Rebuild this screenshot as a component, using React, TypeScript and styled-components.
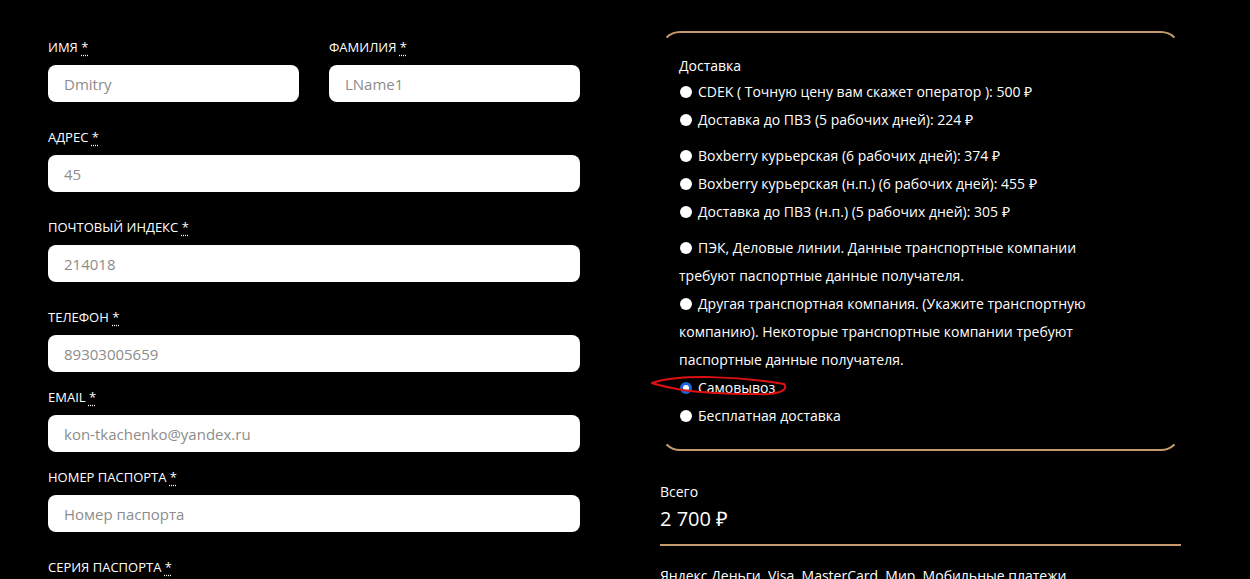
import styled, { createGlobalStyle } from "styled-components";

const GlobalStyle = createGlobalStyle`
  body {
    margin: 0;
    background: #000;
    color: #fff;
    font-family: "Open Sans", "Liberation Sans", sans-serif;
    overflow: hidden;
  }
`;

const Page = styled.div`
  display: grid;
  grid-template-columns: 532px 521px;
  column-gap: 80px;
  padding: 40px 0 0 48px;
  height: 579px;
  box-sizing: border-box;
`;

const FormColumn = styled.div`
  display: flex;
  flex-direction: column;
`;

const Pair = styled.div`
  display: grid;
  grid-template-columns: 1fr 1fr;
  gap: 30px;
`;

const Field = styled.div<{ $tight?: boolean }>`
  display: flex;
  flex-direction: column;
  margin-bottom: ${(p) => (p.$tight ? "18px" : "28px")};
`;

const Label = styled.label`
  font-size: 13px;
  line-height: 14px;
  text-transform: uppercase;
  margin-bottom: 11px;

  > abbr {
    text-decoration: underline dotted;
    text-underline-offset: 3px;
  }
`;

const Input = styled.input`
  height: 37px;
  box-sizing: border-box;
  border: none;
  border-radius: 8px;
  background: #fff;
  padding: 0 16px;
  font-family: inherit;
  font-size: 15px;
  color: #333;
  outline: none;

  &::placeholder {
    color: #8c8c8c;
  }
`;

const SideColumn = styled.div`
  display: flex;
  flex-direction: column;
  margin-top: -9px;
`;

const DeliveryBox = styled.div`
  border: 2px solid transparent;
  border-top-color: #c49a6c;
  border-bottom-color: #c49a6c;
  border-radius: 20px;
  padding: 22px 60px 19px 17px;
`;

const BoxTitle = styled.div`
  font-size: 14px;
  line-height: 22px;
  margin-bottom: 1px;
`;

const Group = styled.div`
  & + & {
    margin-top: 8px;
  }
`;

const Option = styled.label`
  position: relative;
  display: block;
  font-size: 14px;
  line-height: 28px;
`;

const Radio = styled.input.attrs({ type: "radio", name: "delivery" })`
  appearance: none;
  width: 12px;
  height: 12px;
  margin: 0 6px 0 1px;
  border-radius: 50%;
  background: #fff;
  vertical-align: -1px;
  box-sizing: border-box;

  &:checked {
    border: 3px solid #1766e0;
    background: #fff;
  }
`;

const Scribble = styled.svg`
  position: absolute;
  left: -30px;
  top: 1px;
  width: 140px;
  height: 28px;
  pointer-events: none;
`;

const TotalLabel = styled.div`
  font-size: 14px;
  line-height: 22px;
  margin-top: 30px;
`;

const TotalValue = styled.div`
  font-size: 20px;
  line-height: 28px;
  margin-top: 2px;
`;

const Divider = styled.hr`
  border: none;
  height: 2px;
  background: #c49a6c;
  margin: 11px 0 19px;
`;

const PaymentText = styled.div`
  font-size: 14px;
  line-height: 22px;
`;

const groups = [
  [
    "CDEK ( Точную цену вам скажет оператор ): 500 ₽",
    "Доставка до ПВЗ (5 рабочих дней): 224 ₽",
  ],
  [
    "Boxberry курьерская (6 рабочих дней): 374 ₽",
    "Boxberry курьерская (н.п.) (6 рабочих дней): 455 ₽",
    "Доставка до ПВЗ (н.п.) (5 рабочих дней): 305 ₽",
  ],
  [
    "ПЭК, Деловые линии. Данные транспортные компании требуют паспортные данные получателя.",
    "Другая транспортная компания. (Укажите транспортную компанию). Некоторые транспортные компании требуют паспортные данные получателя.",
    "Самовывоз",
    "Бесплатная доставка",
  ],
];

const fields = [
  { label: "Адрес", placeholder: "45" },
  { label: "Почтовый индекс", placeholder: "214018" },
  { label: "Телефон", placeholder: "89303005659", tight: true },
  { label: "Email", placeholder: "kon-tkachenko@yandex.ru", tight: true },
  { label: "Номер паспорта", placeholder: "Номер паспорта" },
  { label: "Серия паспорта", placeholder: "Серия паспорта" },
];

const Req = () => <abbr title="обязательно">*</abbr>;

export default function App() {
  return (
    <>
      <GlobalStyle />
      <Page>
        <FormColumn>
          <Pair>
            <Field>
              <Label>Имя <Req /></Label>
              <Input placeholder="Dmitry" />
            </Field>
            <Field>
              <Label>Фамилия <Req /></Label>
              <Input placeholder="LName1" />
            </Field>
          </Pair>
          {fields.map((f) => (
            <Field key={f.label} $tight={f.tight}>
              <Label>
                {f.label} <Req />
              </Label>
              <Input placeholder={f.placeholder} />
            </Field>
          ))}
        </FormColumn>

        <SideColumn>
          <DeliveryBox>
            <BoxTitle>Доставка</BoxTitle>
            {groups.map((g, i) => (
              <Group key={i}>
                {g.map((text) => (
                  <Option key={text}>
                    <Radio defaultChecked={text === "Самовывоз"} />
                    {text}
                    {text === "Самовывоз" && (
                      <Scribble viewBox="0 0 140 28">
                        <path
                          d="M3 8 C 30 -1, 90 1, 135 9 C 140 15, 130 20, 108 19 C 80 19, 50 18, 28 14 C 18 12, 8 10, 3 8"
                          fill="none"
                          stroke="#e01010"
                          strokeWidth="2"
                          strokeLinecap="round"
                        />
                      </Scribble>
                    )}
                  </Option>
                ))}
              </Group>
            ))}
          </DeliveryBox>
          <TotalLabel>Всего</TotalLabel>
          <TotalValue>2 700 ₽</TotalValue>
          <Divider />
          <PaymentText>Яндекс Деньги, Visa, MasterCard, Мир, Мобильные платежи</PaymentText>
        </SideColumn>
      </Page>
    </>
  );
}
